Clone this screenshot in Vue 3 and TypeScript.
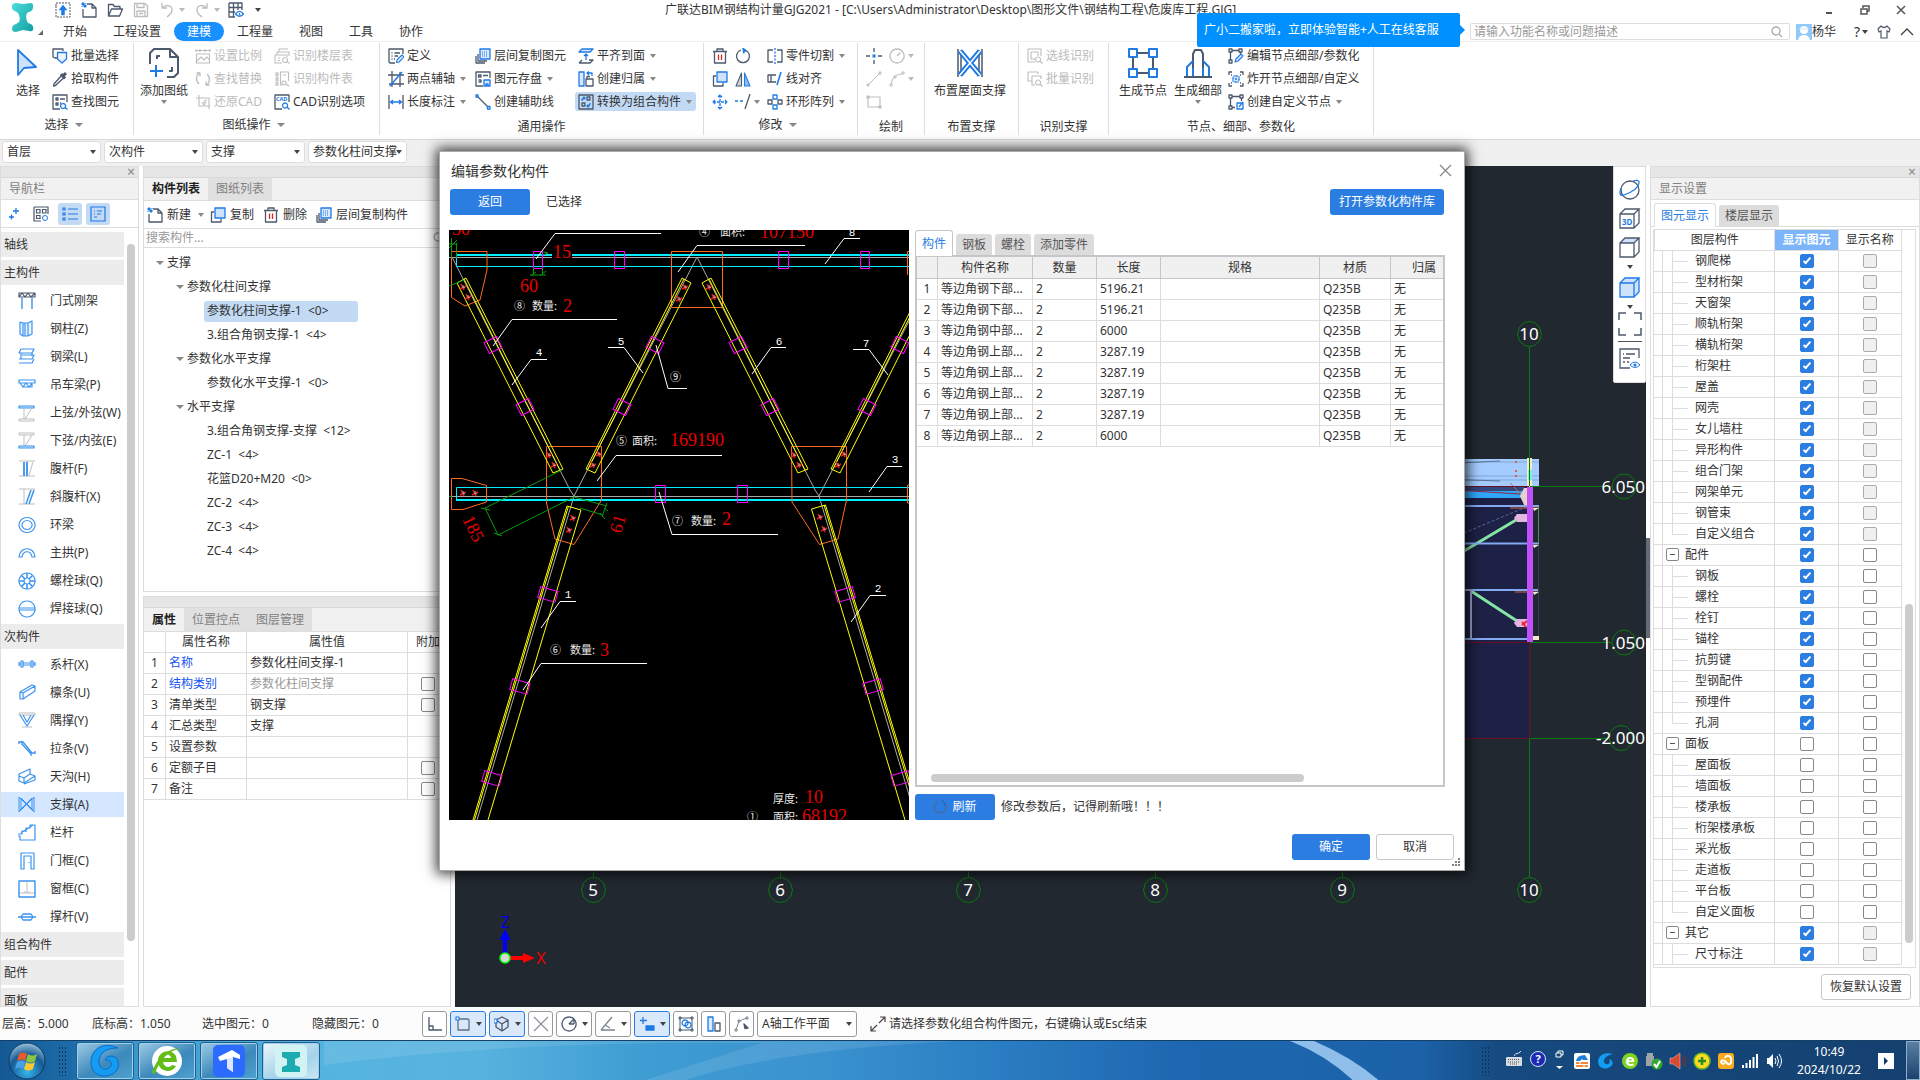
<script setup lang="ts">
import { ref } from 'vue'

const D = '#4c586c'
const B = '#1f7ae6'
const G = '#bdbdbd'
const N = '#3b93ee'

const p = (d: string, stroke = D, fill = 'none', w = 1.3) =>
  `<path d="${d}" stroke="${stroke}" fill="${fill}" stroke-width="${w}" stroke-linejoin="round"/>`

const icons: Record<string, string> = {
  upload: p('M1 4V1H15V15H1Z', D, 'none', 1).replace('/>', ' stroke-dasharray="2 1"/>') + p('M8 3L12 8H9.500V13H6.500V8H4Z', B, B, 0.5),
  newdoc: p('M6 2H11L15 6V15H2V7M11 2V6H15') + p('M1 1H3V3H1ZM3 3H5V5H3ZM1 5V4M5 1V2', B, B, 1),
  open: p('M1.500 14V2.500H6L7.500 4.500H13V7M1.500 14L4.500 7H15.500L12.500 14Z'),
  save: p('M1.500 1.500H12L14.500 4V14.500H1.500ZM4 1.500V5.500H11V1.500M4 14V9H12V14M6 11.500H10', G),
  undo: p('M3 1V6H8M3.500 6C7 2 13 3 13 8C13 12 10 13 8 15', G),
  redo: p('M13 1V6H8M12.500 6C9 2 3 3 3 8C3 12 6 13 8 15', G),
  grideye: p('M1 1H14V8M7 15H1V1M1 5.500H14M1 10H7M5.500 1V15M10 1V8') + p('M7.500 12C10 8.500 13 8.500 15.500 12C13 15 10 15 7.500 12Z', B) + p('M11 12H12', B, B, 2),
  batch: p('M5 10H3L1 9V1H11V3') + p('M5.500 4.500H14.500V11L10 15L5.500 11Z', B, '#edf4ff'),
  pick: p('M10 4L2 13L1.500 15L3.500 14.500L12 6.500') + p('M9 3L13 7.500M11 5L14 2', D, D, 3),
  find: p('M8 15H1V1H15V8M4 4H6V6H4ZM8 5H13M4 9H6V11H4ZM8 9H9') + p('M11 9.500A2.500 2.500 0 1 0 11.100 9.500M13 13.500L15.500 15.500', B),
  scale: p('M1 1V4M15 1V4M1 2.500H15M5 1V4M10 1V4M1.500 6H14.500V15H1.500ZM2 13L6 9L9 12L12 9L14.500 12', G, 'none', 1.1),
  swap: p('M4 13C0 9 1 4 5 2M1.500 2H5V5.500M12 3C16 7 15 12 11 14M14.500 14H11V10.500', G),
  restore: p('M4 1V12H15M1 4H14V15M9 9C9 7 10 6 12 6M7 8L9 11L11 8', G, 'none', 1.1),
  floor: p('M3 7V4H15V8M5 4V1H14M8 15H1V7H13V9M4 10H6M4 12.500H6M11 9.500A2.500 2.500 0 1 0 11.100 9.500M13 13.500L15.500 15.500', G, 'none', 1.1),
  comp: p('M1 2H5M1 4H5M1 7H5M1 9H5M1 12H5M1 14H5M8 14H6.500V1H14.500V10M9 4H12M10 10A2 2 0 1 0 10.100 10M12 13L15 15M3 2V14', G, 'none', 1.1),
  cad: p('M8 15H1V1H15V8') + `<text x="2" y="7" font-size="5.500" font-weight="700" font-family="Noto Sans" fill="${B}">CAD</text>` + p('M11 9A2.500 2.500 0 1 0 11.100 9M13 13L15.500 15.500', B),
  define: p('M7 15H2L1 14V1H15V6M3.500 5H4.500M6.500 5H12M3.500 8H4.500M6.500 8H10M3.500 11H4.500M6 11H7') + p('M8.500 14.500L9 12L14 7L16 9L11 14Z', B, '#edf4ff', 1.1),
  axis2: p('M4 0V16M0 4H16M12 1V16M1 13H16') + p('M2 15L14 1', B, 'none', 1.600),
  length: p('M1 1V15M15 1V15') + p('M2.500 8H13.500M5 6L2.500 8L5 10M11 6L13.500 8L11 10', B),
  layercopy: p('M1 8V15H10M3 6V13H12') + p('M5 1H15V11H5Z', B, '#d9e8fd') + p('M7 4H13M7 6H13M7 8H13', B, 'none', 1).replace('/>', ' stroke-dasharray="1 1"/>'),
  store: p('M8 15H1V1H15V7M3.500 4H6V6H3.500ZM8 4.500H13M3.500 9H6V11H3.500') + p('M9 9H15V15H9Z', B, '#d9e8fd') + p('M11 15V13H13V15', B),
  helpline: p('M2 2L13 13') + p('M1 1H3V3H1ZM12.500 12.500H15V15H12.500Z', B, '#fff'),
  align: p('M4 1H15L12 4H1Z', B, '#d9e8fd') + p('M1 15H12L15 12H11M4 12L1 15') + p('M8 12V6M6 8L8 6L10 8', B),
  owner: p('M1 1H6V15H1Z', B, '#d9e8fd') + p('M8 15V8H15V15ZM9 8V5.500H12') + p('M9 2H14V5M11 0.500L9 2L11 4', B),
  convert: p('M1 1H15V15H1Z') + p('M9 3H12V6H9ZM4 9H7V12H4Z') + p('M4 7C4 4 5 4 7 4M12 9C12 12 11 12 9 12M5.500 2.500L7 4L5.500 5.500M10.500 10.500L9 12L10.500 13.500', B),
  trash: p('M1 3.500H15M5 3V1H11V3M2.500 4V15H13.500V4') + p('M6.500 6.500V12M9.500 6.500V12', '#d22'),
  rotate: p('M10 2A6.500 6.500 0 1 1 6 2') + p('M7.500 0L11 2.500L8 5', B, B),
  copy: p('M4 5H1.500V15H11V12') + p('M5 1H15V11H5Z', B, '#cfe2fb'),
  mirror: p('M6.500 2V15H1Z', D, '#cfd5de', 1.1) + p('M9.500 2V15H15Z', B, '#8fbdf5', 1.1),
  move: p('M8 1V15M1 8H15M6 3L8 1L10 3M6 13L8 15L10 13M3 6L1 8L3 10M13 6L15 8L13 10', B).replace('/>', ' stroke-dasharray="3 1"/>'),
  extend: p('M0 7H10', B).replace('/>', ' stroke-dasharray="3 2"/>') + p('M15 0L10 15'),
  cut: p('M6 14H1V2H6M10 2H15V14H10') + p('M8 0V16', B).replace('/>', ' stroke-dasharray="2 1.500"/>'),
  linealign: p('M9 4H1V11H9M4 4V11') + p('M14 1L10 14', B, 'none', 1.600),
  ring: p('M1 6H5V10H1ZM11 6H15V10H11Z') + p('M6 1H10V5H6ZM6 11H10V15H6Z', B),
  point: p('M8 0V4M8 12V16M0 8H4M12 8H16') + p('M6.500 8H9.500', B, B, 3),
  circle: p('M8 1A7 7 0 1 0 8.100 1M8 8L11.500 4.500', G),
  line: p('M2.500 13.500L13.500 2.500M1 13H3V15H1ZM13 1H15V3H13Z', G, 'none', 1),
  arc: p('M2.500 13C3 7 6 3.500 13 3M1 13H3V15H1ZM13 1H15V3H13ZM5 5H7V7H5Z', G, 'none', 1),
  rect: p('M2 3H14V13H2ZM1 2H3V4H1ZM13 12H15V14H13Z', G, 'none', 1.1),
  selid: p('M8 14H1V1H14V8M4 4H11V8M4 4V11H8M11 9A2.500 2.500 0 1 0 11.100 9M13 13L15.500 15.500', G, 'none', 1.1),
  batchid: p('M5 10H1V1H11V3M8 14H5V5H14V8M11 9A2.500 2.500 0 1 0 11.100 9M13 13L15.500 15.500', G, 'none', 1.1),
  nodeedit: p('M1 1H4V4H1ZM11 1H14V4H11ZM1 12H4V15H1ZM4 2.500H11M2.500 4V12M12.500 4V6') + p('M7 14L8 11L13 6L15 8L10 13Z', B, '#d9e8fd', 1.1),
  nodeburst: p('M1 4V1H4M12 1H15V4M1 12V15H4M12 15H15V12M3 4H4M12 4H13M3 12H4M12 12H13') + p('M5 5H11V11H5ZM8 4V12M4 8H12', B, '#d9e8fd', 1).replace('/>', ' stroke-dasharray="2 1"/>'),
  nodenew: p('M1 1H4V4H1ZM12 1H15V4H12ZM1 12H4V15H1ZM4 2.500H12M2.500 4V12M13.500 4V7M4 13.500H7') + p('M9 9H15V15H9Z', B) + p('M11 13L15 8', B),
}

const big: Record<string, string> = {
  cursor: p('M5 2V27L11 20L23 19Z', B, '#cfe2fb', 1.800),
  addpaper: p('M1 16V5L5 1H21L29 9V25L25 29H18M21 1V9H29M1 10V16', D, 'none', 2) + p('M8 11V8H11M20 23H23V19', D, 'none', 2) + p('M7 17V29M1 23H14', B, 'none', 2),
  brace: p('M3 1V29M27 1V29M6 2V28M24 2V28', D, 'none', 1.500) + p('M5 3L25 27M25 3L5 27', B, 'none', 5.500) + p('M5 3L25 27M25 3L5 27', '#fff', 'none', 1.500),
  node: p('M5 5H25V25H5Z', D, 'none', 2) + p('M1 1H9V9H1ZM21 1H29V9H21ZM1 21H9V29H1ZM21 21H29V29H21Z', B, '#fff', 2),
  detail: p('M10 28V6L12 2H18L20 6V28M1 29H29', D, 'none', 2) + p('M4 28V19L10 13M26 28V19L20 13M10 20V28M20 20V28', B, 'none', 2),
}

const navIcons: Record<string, string> = {
  frame: p('M1 1H17V5H1ZM1 5L4 1L7 5L10 1L13 5L17 1', D, 'none', 1.200) + p('M4 6V17M14 6V17', N, 'none', 1.400),
  col: p('M2 2L5 3V16L2 14ZM5 3H10V16H5M10 3L14 1V14L10 16M7 3V16', N, '#eaf4ff', 1.200),
  beam: p('M3 1H16L14 5H1ZM1 11H14L16 7H4M1 15H14L16 11M3 5V11M14 5V8', N, 'none', 1.200),
  crane: p('M1 4H17V7H1ZM2 7L5 11L8 7L11 11L14 7M5 11H14V8', N, 'none', 1.200),
  up: p('M1 2H16V4H1Z', N, '#cfe5ff', 1.200) + p('M6 4V15M14 4L7 15M1 15H16V17H1Z', G, 'none', 1),
  down: p('M6 3V14M14 3L7 14M1 1H16V3H1Z', G, 'none', 1) + p('M1 14H16V16H1Z', N, '#cfe5ff', 1.200),
  web: p('M1 1H17M1 16H17M15 2L11 15M9 1V16', G, 'none', 1) + p('M6 2V16M9 2V16', N, 'none', 1.800),
  xweb: p('M1 1H17M1 16H17M6 1V16', G, 'none', 1) + p('M13 2L8 16M16 2L11 16', N, 'none', 1.500),
  ring: p('M9 1.500A8 7.500 0 1 0 9.100 1.500M9 4.500A5 4.500 0 1 0 9.100 4.500', N, 'none', 1.200),
  arch: p('M1 13C2 2 16 2 17 13H14C13 6 5 6 4 13Z', N, 'none', 1.200),
  bolt: p('M9 1A8 8 0 1 0 9.100 1M9 6A3 3 0 1 0 9.100 6', N, 'none', 1.200) + p('M9 1V6M9 12V17M1 9H6M12 9H17M3.500 3.500L7 7M11 11L14.500 14.500M14.500 3.500L11 7M7 11L3.500 14.500', N, 'none', 1.600),
  ball: p('M9 1A8 8 0 1 0 9.100 1M1 8H17M1 10H17', N, 'none', 1.200),
  tie: p('M5 7H13V9H5ZM3 5H5V11H3ZM13 5H15V11H13ZM1 6V10M17 6V10M1 8H3M15 8H17', N, 'none', 1.200),
  purlin: p('M2 8L14 1L17 2V7L5 15H2ZM2 8L5 9V15M5 9L17 2', N, 'none', 1.200),
  corner: p('M1 1H17V3H1ZM4 15H14', G, 'none', 1) + p('M2 3L9 14L16 3M5 3L9 10L13 3', N, 'none', 1.200),
  stay: p('M1 2H5L14 13H17M4 1V5M4 4L13 14V16M17 14V11M1 4V1', N, 'none', 1.300),
  gutter: p('M1 6L12 1V6L17 8L6 15L1 13ZM1 8L6 10V15M6 10L12 6M17 8V12L6 16', N, 'none', 1.200),
  brace: p('M1 1V16M3 3V14M16 1V16M14 3V14M1 1L16 16M16 1L1 16M3 2L15 14M14 2L2 14', N, 'none', 1),
  rail: p('M0 10H4V7H8V4H12V1H17V16H2V12H0M3 9L15 1M8 8V5', N, 'none', 1.200),
  door: p('M3 17V1H16V17H13V4H6V17ZM11 10V11', N, 'none', 1.200),
  window: p('M9 2V13M1 13H17M6 12H8M10 12H12', G, 'none', 1) + p('M1 1H17V17H1Z', N, 'none', 1.400),
  strut: p('M0 9H3M15 9H18M5 6H13L15 9L13 12H5L3 9ZM3 9H15', N, 'none', 1.300),
}

type Item = { i: string; t?: string; a?: boolean; off?: boolean; on?: boolean }
type Group = {
  w: number
  pad: number
  label: string
  arrow?: boolean
  bigs: { i: string; t: string; w: number; a?: boolean }[]
  cols: { w: number; items: Item[] }[]
}
const groups: Group[] = [
  { w: 134, pad: 7, label: '选择', arrow: true, bigs: [{ i: 'cursor', t: '选择', w: 42 }], cols: [{ w: 80, items: [{ i: 'batch', t: '批量选择' }, { i: 'pick', t: '拾取构件' }, { i: 'find', t: '查找图元' }] }] },
  { w: 246, pad: 2, label: '图纸操作', arrow: true, bigs: [{ i: 'addpaper', t: '添加图纸', w: 56, a: true }], cols: [
    { w: 79, items: [{ i: 'scale', t: '设置比例', off: true }, { i: 'swap', t: '查找替换', off: true }, { i: 'restore', t: '还原CAD', off: true }] },
    { w: 105, items: [{ i: 'floor', t: '识别楼层表', off: true }, { i: 'comp', t: '识别构件表', off: true }, { i: 'cad', t: 'CAD识别选项' }] }] },
  { w: 324, pad: 5, label: '通用操作', bigs: [], cols: [
    { w: 87, items: [{ i: 'define', t: '定义' }, { i: 'axis2', t: '两点辅轴', a: true }, { i: 'length', t: '长度标注', a: true }] },
    { w: 103, items: [{ i: 'layercopy', t: '层间复制图元' }, { i: 'store', t: '图元存盘', a: true }, { i: 'helpline', t: '创建辅助线' }] },
    { w: 121, items: [{ i: 'align', t: '平齐到面', a: true }, { i: 'owner', t: '创建归属', a: true }, { i: 'convert', t: '转换为组合构件', a: true, on: true }] }] },
  { w: 154, pad: 5, label: '修改', arrow: true, bigs: [], cols: [
    { w: 23, items: [{ i: 'trash' }, { i: 'copy' }, { i: 'move' }] },
    { w: 32, items: [{ i: 'rotate' }, { i: 'mirror' }, { i: 'extend', a: true }] },
    { w: 90, items: [{ i: 'cut', t: '零件切割', a: true }, { i: 'linealign', t: '线对齐' }, { i: 'ring', t: '环形阵列', a: true }] }] },
  { w: 67, pad: 5, label: '绘制', bigs: [], cols: [
    { w: 23, items: [{ i: 'point' }, { i: 'line' }, { i: 'rect' }] },
    { w: 32, items: [{ i: 'circle', a: true, off: true }, { i: 'arc', a: true, off: true }] }] },
  { w: 94, pad: 5, label: '布置支撑', bigs: [{ i: 'brace', t: '布置屋面支撑', w: 80 }], cols: [] },
  { w: 90, pad: 5, label: '识别支撑', bigs: [], cols: [{ w: 80, items: [{ i: 'selid', t: '选线识别', off: true }, { i: 'batchid', t: '批量识别', off: true }] }] },
  { w: 265, pad: 6, label: '节点、细部、参数化', bigs: [{ i: 'node', t: '生成节点', w: 56 }, { i: 'detail', t: '生成细部', w: 54, a: true }], cols: [
    { w: 148, items: [{ i: 'nodeedit', t: '编辑节点细部/参数化' }, { i: 'nodeburst', t: '炸开节点细部/自定义' }, { i: 'nodenew', t: '创建自定义节点', a: true }] }] },
]

const menus = ['开始', '工程设置', '建模', '工程量', '视图', '工具', '协作']
const combos = ['首层', '次构件', '支撑', '参数化柱间支撑']

const nav: { t: string; i?: string }[] = [
  { t: '轴线' }, { t: '主构件' },
  { t: '门式刚架', i: 'frame' }, { t: '钢柱(Z)', i: 'col' }, { t: '钢梁(L)', i: 'beam' }, { t: '吊车梁(P)', i: 'crane' },
  { t: '上弦/外弦(W)', i: 'up' }, { t: '下弦/内弦(E)', i: 'down' }, { t: '腹杆(F)', i: 'web' }, { t: '斜腹杆(X)', i: 'xweb' },
  { t: '环梁', i: 'ring' }, { t: '主拱(P)', i: 'arch' }, { t: '螺栓球(Q)', i: 'bolt' }, { t: '焊接球(Q)', i: 'ball' },
  { t: '次构件' },
  { t: '系杆(X)', i: 'tie' }, { t: '檩条(U)', i: 'purlin' }, { t: '隅撑(Y)', i: 'corner' }, { t: '拉条(V)', i: 'stay' },
  { t: '天沟(H)', i: 'gutter' }, { t: '支撑(A)', i: 'brace' }, { t: '栏杆', i: 'rail' }, { t: '门框(C)', i: 'door' },
  { t: '窗框(C)', i: 'window' }, { t: '撑杆(V)', i: 'strut' },
  { t: '组合构件' }, { t: '配件' }, { t: '面板' },
]

const tree: { t: string; l: number; open?: boolean }[] = [
  { t: '支撑', l: 0, open: true },
  { t: '参数化柱间支撑', l: 1, open: true },
  { t: '参数化柱间支撑-1  <0>', l: 2 },
  { t: '3.组合角钢支撑-1  <4>', l: 2 },
  { t: '参数化水平支撑', l: 1, open: true },
  { t: '参数化水平支撑-1  <0>', l: 2 },
  { t: '水平支撑', l: 1, open: true },
  { t: '3.组合角钢支撑-支撑  <12>', l: 2 },
  { t: 'ZC-1  <4>', l: 2 },
  { t: '花篮D20+M20  <0>', l: 2 },
  { t: 'ZC-2  <4>', l: 2 },
  { t: 'ZC-3  <4>', l: 2 },
  { t: 'ZC-4  <4>', l: 2 },
]
const selectedNode = ref('参数化柱间支撑-1  <0>')

const props = [
  { n: '名称', v: '参数化柱间支撑-1', blue: true },
  { n: '结构类别', v: '参数化柱间支撑', blue: true, gray: true, c: true },
  { n: '清单类型', v: '钢支撑', c: true },
  { n: '汇总类型', v: '支撑' },
  { n: '设置参数', v: '' },
  { n: '定额子目', v: '', c: true },
  { n: '备注', v: '', c: true },
]

const parts = [
  ['等边角钢下部...', '5196.21'], ['等边角钢下部...', '5196.21'], ['等边角钢中部...', '6000'],
  ['等边角钢上部...', '3287.19'], ['等边角钢上部...', '3287.19'], ['等边角钢上部...', '3287.19'],
  ['等边角钢上部...', '3287.19'], ['等边角钢上部...', '6000'],
]

type Layer = { t: string; top?: boolean; last?: boolean; show: boolean; dis: boolean }
const mk = (names: string, show: boolean, dis: boolean): Layer[] =>
  names.split(' ').map((t, k, a) => ({ t, show, dis, last: k === a.length - 1 }))
const layers = ref<Layer[]>([
  ...mk('钢爬梯 型材桁架 天窗架 顺轨桁架 横轨桁架 桁架柱 屋盖 网壳 女儿墙柱 异形构件 组合门架 网架单元 钢管束 自定义组合', true, true),
  { t: '配件', top: true, show: true, dis: false },
  ...mk('钢板 螺栓 栓钉 锚栓 抗剪键 型钢配件 预埋件 孔洞', true, false),
  { t: '面板', top: true, show: false, dis: false },
  ...mk('屋面板 墙面板 楼承板 桁架楼承板 采光板 走道板 平台板 自定义面板', false, false),
  { t: '其它', top: true, show: true, dis: true },
  { t: '尺寸标注', show: true, dis: true },
])

const status: { w: number; on?: boolean; a?: boolean; s: string }[] = [
  { w: 25, s: p('M2 1V14H15M2 10H6V14') },
  { w: 36, on: true, a: true, s: p('M3 3H13L14 4V14H3Z', '#5d7088') + p('M1 1H4V4H1Z', B, '#fff', 1.200) },
  { w: 36, on: true, a: true, s: p('M8 1L14 4V11L8 15L2 11V4ZM2 4L8 8L14 4M8 8V15') + p('M0 3H3V7H0Z', B, '#fff', 1.200) },
  { w: 25, s: p('M1 1L15 15M15 1L1 15', '#8d95a0') },
  { w: 36, a: true, s: p('M8 1A7 7 0 1 0 8.100 1M8 8L13 3M8 8H13M13 3V8') },
  { w: 36, a: true, s: p('M1 14H15M1 14L12 1M5 9L10 12', '#7d8590') },
  { w: 36, on: true, a: true, s: p('M4 1V8M1 4.500H8', B) + p('M7 10H15V14H7Z', B, B) },
  { w: 25, s: p('M2 2H14V14H2ZM1 1H3V3H1ZM13 1H15V3H13ZM1 13H3V15H1ZM13 13H15V15H13Z', D, 'none', 1) + p('M7 4A3 3 0 1 0 7.100 4M10 6A3 3 0 1 0 10.100 6', B) },
  { w: 25, s: p('M2 1H7V15H2Z', B, '#d9e8fd') + p('M9 15V7H14V15Z') },
  { w: 25, s: p('M2 14L5 5L13 2M1 13H3V15H1ZM4 4H6V6H4ZM12 1H14V3H12Z', '#7d8590', 'none', 1) + p('M10 8L14 12L11 12.500Z', D, D) },
]

const axes = [{ x: 593, n: '5' }, { x: 780, n: '6' }, { x: 968, n: '7' }, { x: 1155, n: '8' }, { x: 1342, n: '9' }, { x: 1529, n: '10' }]
const oct = 'M-5 -11.500L0 -12.500L5 -11.500L10 -7L12 0L10 7L5 11.500L0 12.500L-5 11.500L-10 7L-12 0L-10 -7Z'
</script>

<template>
  <div class="app">
    <header class="top">
      <div class="logo">
        <svg width="24" height="32" viewBox="0 0 24 32">
          <defs><linearGradient id="lg" x1="0" y1="0" x2="1" y2="1"><stop offset="0" stop-color="#4fdcdc" /><stop offset="1" stop-color="#129fa3" /></linearGradient></defs>
          <path d="M1 3Q2 1 5 1L12 2L19 1Q23 1 22 5Q22 9 18 10L16 11Q14 16 17 21L20 22Q23 24 22 28Q21 30 18 29L12 28L5 30Q1 30 1 27Q1 23 5 22L8 20Q10 16 7 11L4 9Q0 8 1 3Z" fill="url(#lg)" />
        </svg>
        <i class="corner"></i>
      </div>
      <div class="topmain">
        <div class="quick">
          <button v-for="q in ['upload', 'newdoc', 'open', 'save']" :key="q" class="qb" :aria-label="q"><svg width="16" height="16" v-html="icons[q]"></svg></button>
          <button class="qb" aria-label="undo"><svg width="16" height="16" v-html="icons.undo"></svg><i class="ar lt"></i></button>
          <button class="qb r" aria-label="redo"><svg width="16" height="16" v-html="icons.redo"></svg><i class="ar lt"></i></button>
          <button class="qb v" aria-label="view"><svg width="16" height="16" v-html="icons.grideye"></svg></button>
          <i class="ar dk"></i>
          <span class="title">广联达BIM钢结构计量GJG2021 - [C:\Users\Administrator\Desktop\图形文件\钢结构工程\危废库工程.GJG]</span>
          <span class="winbtns">
            <button aria-label="最小化"><svg width="10" height="10"><path d="M2 8H8" stroke="#555" stroke-width="2" /></svg></button>
            <button aria-label="还原"><svg width="10" height="10"><path d="M3 3V1H9V6H7M1 4H7V9H1Z" stroke="#555" fill="none" stroke-width="1.500" /></svg></button>
            <button aria-label="关闭"><svg width="10" height="10"><path d="M1 1L9 9M9 1L1 9" stroke="#555" stroke-width="1.500" /></svg></button>
          </span>
        </div>
        <div class="menurow">
          <nav class="menus">
            <button v-for="m in menus" :key="m" :class="{ on: m === '建模' }">{{ m }}</button>
          </nav>
          <div class="user">
            <label class="fsearch"><input type="text" aria-label="搜索功能" placeholder="请输入功能名称或问题描述" /><svg width="12" height="12"><circle cx="5" cy="5" r="4" fill="none" stroke="#aaa" stroke-width="1.300" /><path d="M8 8L11 11" stroke="#aaa" stroke-width="1.300" /></svg></label>
            <svg class="avatar" width="16" height="16"><rect width="16" height="16" fill="#90c8fb" /><circle cx="8" cy="6" r="4" fill="#fff" /><path d="M2 16Q3 11 8 11Q13 11 14 16Z" fill="#fff" /><path d="M3 5H13" stroke="#cfe8ff" /></svg>
            <span>杨华</span>
            <button class="help" aria-label="帮助"><b>?</b><i class="ar dk"></i></button>
            <button class="shirt" aria-label="皮肤"><svg width="14" height="14"><path d="M4 1L1 4L2 7L4 6V13H10V6L12 7L13 4L10 1Q7 4 4 1Z" fill="none" stroke="#4c586c" stroke-width="1.200" /></svg></button>
            <button class="fold" aria-label="收起"><svg width="14" height="10"><path d="M1 8L7 2L13 8" fill="none" stroke="#444" stroke-width="1.300" /></svg></button>
          </div>
        </div>
      </div>
      <div class="tip">广小二搬家啦，立即体验智能+人工在线客服</div>
    </header>

    <section class="ribbon">
      <div v-for="g in groups" :key="g.label" class="group" :style="{ width: g.w + 'px' }">
        <div class="gbody" :style="{ paddingLeft: g.pad + 'px' }">
          <button v-for="b in g.bigs" :key="b.t" class="bigbtn" :style="{ width: b.w + 'px' }">
            <svg width="30" height="30" v-html="big[b.i]"></svg>
            <span>{{ b.t }}</span>
            <i v-if="b.a" class="ar"></i>
          </button>
          <div v-for="(c, ci) in g.cols" :key="ci" class="gcol" :style="{ width: c.w + 'px' }">
            <button v-for="it in c.items" :key="it.i" class="item" :class="{ off: it.off, on: it.on }" :aria-label="it.t || it.i">
              <svg width="16" height="16" v-html="icons[it.i]"></svg><span v-if="it.t">{{ it.t }}</span><i v-if="it.a" class="ar"></i>
            </button>
          </div>
        </div>
        <div class="glabel" :class="{ plain: !g.arrow }">{{ g.label }}<i v-if="g.arrow" class="ar w"></i></div>
      </div>
    </section>

    <div class="combos">
      <label v-for="c in combos" :key="c" class="combo"><select :aria-label="c"><option>{{ c }}</option></select><i class="ar dk"></i></label>
    </div>

    <main class="main">
      <aside class="navp">
        <div class="strip"><span class="x">×</span></div>
        <div class="ptitle">导航栏</div>
        <div class="navtools">
          <button aria-label="添加"><svg width="10" height="12"><path d="M0 9H5M2.500 6.500V11.500M4 3H10M7 0V6" stroke="#1f7ae6" stroke-width="1.300" /></svg></button>
          <button aria-label="网格"><svg width="16" height="16"><path d="M1 1H15V8M8 15H1V1M3.500 3.500H7V7H3.500ZM9.500 3.500H13V7H9.500ZM3.500 9.500H7V12.500H3.500Z" fill="none" stroke="#4c586c" stroke-width="1.200" /><circle cx="12" cy="12" r="2.500" fill="#fff" stroke="#1f7ae6" /></svg></button>
          <button class="on" aria-label="列表"><svg width="16" height="16"><path d="M6 3H16M6 8H16M6 13H16M1 2H3V4H1ZM1 7H3V9H1ZM1 12H3V14H1Z" fill="none" stroke="#1f7ae6" stroke-width="1.200" /></svg></button>
          <button class="on" aria-label="详情"><svg width="16" height="16"><path d="M1 1H15V15H1ZM4 5H5M7 5H12M4 8H5M7 8H11M4 11H7" fill="none" stroke="#1f7ae6" stroke-width="1.200" /></svg></button>
        </div>
        <div class="navbody">
          <div class="navlist">
            <a v-for="n in nav" :key="n.t + (n.i || '')" href="#" :class="n.i ? ['leaf', { on: n.i === 'brace' }] : 'cat'"><svg v-if="n.i" width="18" height="18" v-html="navIcons[n.i]"></svg>{{ n.t }}</a>
          </div>
          <div class="navbar"><i></i></div>
        </div>
      </aside>

      <div class="mid">
        <section class="box list">
          <div class="strip"></div>
          <div class="tabs"><button class="on">构件列表</button><button>图纸列表</button></div>
          <div class="ltools">
            <button><svg width="16" height="16" v-html="icons.newdoc"></svg><span>新建</span><i class="ar"></i></button>
            <button><svg width="16" height="16" v-html="icons.copy"></svg><span>复制</span></button>
            <button><svg width="16" height="16" v-html="icons.trash"></svg><span>删除</span></button>
            <button><svg width="16" height="16" v-html="icons.layercopy"></svg><span>层间复制构件</span></button>
          </div>
          <label class="lsearch"><input type="text" aria-label="搜索构件" placeholder="搜索构件..." /><svg width="12" height="12"><circle cx="5" cy="5" r="4" fill="none" stroke="#aaa" stroke-width="1.300" /></svg></label>
          <ul class="tree">
            <li v-for="t in tree" :key="t.t" :class="'l' + t.l">
              <i v-if="t.open" class="ar w"></i><button :class="{ on: t.t === selectedNode }" @click="selectedNode = t.t">{{ t.t }}</button>
            </li>
          </ul>
        </section>
        <section class="box prop">
          <div class="strip"></div>
          <div class="tabs"><button class="on">属性</button><button>位置控点</button><button>图层管理</button></div>
          <table class="ptable">
            <colgroup><col style="width: 22px" /><col style="width: 81px" /><col style="width: 161px" /><col /></colgroup>
            <thead><tr><th></th><th>属性名称</th><th>属性值</th><th>附加</th></tr></thead>
            <tbody>
              <tr v-for="(r, k) in props" :key="r.n">
                <td class="num">{{ k + 1 }}</td><td :class="{ blue: r.blue }">{{ r.n }}</td><td :class="{ gray: r.gray }">{{ r.v }}</td>
                <td class="c"><input v-if="r.c" type="checkbox" :aria-label="r.n" /></td>
              </tr>
            </tbody>
          </table>
        </section>
      </div>

      <section class="view">
        <svg class="scene" viewBox="455 166 1191 841" preserveAspectRatio="xMinYMin slice" font-family="Noto Sans" font-size="17">
          <rect x="1440" y="487" width="90" height="251" fill="#1d2145" />
          <rect x="1440" y="459" width="99" height="28" fill="#a4ccff" />
          <path d="M1440 462H1539M1440 476H1539M1440 480H1539" stroke="#7ea7dc" />
          <path d="M1440 464L1500 461M1440 479L1500 481" stroke="#5d7396" fill="none" /><path d="M1516 461V463M1516 470V472M1516 475V477" stroke="#d8663a" stroke-width="2" />
          <rect x="1440" y="487" width="85" height="5" fill="#31487e" />
          <rect x="1440" y="491" width="85" height="7" fill="#2fa6f7" />
          <path d="M1440 489L1520 494" stroke="#8f2540" />
          <path d="M1464 533L1526 507" stroke="#5b68a8" stroke-dasharray="3 2" />
          <path d="M1464 551L1516 520M1471 591L1517 621" stroke="#86e5a4" stroke-width="3" />
          <path d="M1440 506H1539M1440 543.500H1539M1440 590H1539M1440 639H1539" stroke="#84a9f0" stroke-width="2" />
          <path d="M1464 590H1471V640" stroke="#9aa4c8" stroke-width="2" fill="none" />
          <path d="M1510 483L1522 495M1510 508H1539M1515 592H1539" stroke="#d8663a" fill="none" />
          <path d="M1538.500 507V543" stroke="#4f8a5a" /><path d="M1538.500 545V640" stroke="#333c5c" />
          <path d="M1524 488H1528V505H1524L1520 496Z" fill="#e8cfcb" />
          <path d="M1517 514H1527V522H1517L1514 518ZM1517 619H1527V627H1517L1514 623Z" fill="#e2b5df" />
          <path d="M1522 622L1526 627M1527 621L1522 625" stroke="#f02030" stroke-width="2" />
          <path d="M1533 508H1539L1534 511ZM1533 545H1539L1534 548ZM1533 592H1539L1534 595ZM1533 636H1539V640H1533Z" fill="#f3e8c8" />
          <rect x="1527" y="487" width="6" height="155" fill="#bf50fa" />
          <rect x="1527" y="458" width="5" height="29" fill="#f4ecc6" /><rect x="1528" y="470" width="4" height="10" fill="#7ff0d8" />
          <path d="M1440 486.500H1529M1440 642.500H1529.500V738.500H1440" stroke="#6b1026" fill="none" />
          <path d="M1529.500 346V486M1529.500 738V878M1530 486.500H1612M1530 642.500H1612M1530 738.500H1609" stroke="#087a10" fill="none" />
          <g stroke="#087a10" fill="none">
            <path :d="oct" transform="translate(1529.500 334)" /><path :d="oct" transform="translate(1624 486.500)" /><path :d="oct" transform="translate(1624 642.500)" /><path :d="oct" transform="translate(1621 738)" />
            <template v-for="a in axes" :key="a.n"><path :d="oct" :transform="`translate(${a.x + 0.5} 890)`" /><path :d="`M${a.x + 0.5} 860V878`" /></template>
          </g>
          <g fill="#fff">
            <text x="1529" y="340" text-anchor="middle">10</text>
            <text v-for="a in axes" :key="a.n" :x="a.x" y="896" text-anchor="middle">{{ a.n }}</text>
            <text x="1645" y="493" text-anchor="end">6.050</text><text x="1645" y="649" text-anchor="end">1.050</text><text x="1645" y="744" text-anchor="end">-2.000</text>
          </g>
          <path d="M505 956V936" stroke="#00f" stroke-width="4" /><path d="M499.500 940L505 929L510.500 940Z" fill="#00f" />
          <path d="M509 958H524" stroke="#f00" stroke-width="4" /><path d="M523 953L535 958L523 963Z" fill="#f00" />
          <circle cx="505" cy="958" r="5" fill="#d8d8d8" stroke="#0f0" stroke-width="1.500" />
          <text x="505" y="928" text-anchor="middle" fill="#0000e0" font-size="16">Z</text><text x="541" y="964" text-anchor="middle" fill="#f00000" font-size="16">X</text>
        </svg>
        <div class="vtools">
          <button aria-label="旋转"><svg width="24" height="24"><circle cx="12" cy="12" r="9" fill="none" stroke="#4c586c" stroke-width="1.300" /><path d="M3 10Q0 19 6 17Q20 12 21 5Q22 1 15 3" fill="none" stroke="#1f7ae6" stroke-width="1.300" /></svg></button>
          <button aria-label="三维"><svg width="24" height="24"><path d="M2 7H16V21H2ZM2 7L7 2H21L16 7M21 2V16L16 21" fill="none" stroke="#4c586c" stroke-width="1.300" /><text x="4" y="18" font-size="8" font-weight="700" font-family="Noto Sans" fill="#1f7ae6">3D</text></svg></button>
          <button aria-label="线框"><svg width="24" height="24"><path d="M2 7L7 2H21L16 7Z" fill="#cfe2fb" /><path d="M2 7H16V21H2ZM2 7L7 2H21L16 7M21 2V16L16 21" fill="none" stroke="#4c586c" stroke-width="1.300" /></svg></button>
          <i class="ar dk"></i>
          <button aria-label="实体"><svg width="24" height="24"><path d="M2 7L7 2H21V16L16 21H2Z" fill="#cfe2fb" /><path d="M2 7H16V21H2ZM2 7L7 2H21L16 7M21 2V16L16 21" fill="none" stroke="#1f7ae6" stroke-width="1.300" /></svg></button>
          <i class="ar dk"></i>
          <button class="fit" aria-label="全屏"><svg width="24" height="24"><path d="M1 8V1H8M16 1H23V8M1 16V23H8M16 23H23V16" fill="none" stroke="#4c586c" stroke-width="1.500" /></svg></button>
          <hr />
          <button aria-label="显示设置"><svg width="24" height="24"><path d="M21 11V2H2V21H12M5 7H6M8 7H17M5 11H12M5 15H7M9 15H11" fill="none" stroke="#4c586c" stroke-width="1.300" /><path d="M12 18Q17 12 22 18Q17 23 12 18Z" fill="#fff" stroke="#1f7ae6" /><circle cx="17" cy="18" r="1.500" fill="#1f7ae6" /></svg></button>
        </div>
      </section>
      <div class="handle"><i></i></div>

      <aside class="disp">
        <div class="strip"><span class="x">×</span></div>
        <div class="ptitle">显示设置</div>
        <div class="dtabs"><button class="on">图元显示</button><button>楼层显示</button></div>
        <div class="dbody">
          <table class="dtable">
            <colgroup><col style="width: 121px" /><col style="width: 63px" /><col style="width: 63px" /></colgroup>
            <thead><tr><th>图层构件</th><th class="on">显示图元</th><th>显示名称</th></tr></thead>
            <tbody>
              <tr v-for="l in layers" :key="l.t">
                <td :class="l.top ? 'par' : ['chd', { last: l.last }]"><span v-if="l.top" class="minus"></span>{{ l.t }}</td>
                <td class="c"><input v-model="l.show" type="checkbox" :aria-label="l.t + '显示图元'" /></td>
                <td class="c"><input type="checkbox" :disabled="l.dis" :aria-label="l.t + '显示名称'" /></td>
              </tr>
            </tbody>
          </table>
          <div class="dscroll"><i></i></div>
        </div>
        <div class="dfoot"><button class="white">恢复默认设置</button></div>
      </aside>
    </main>

    <footer class="status">
      <span class="s1">层高：5.000</span><span class="s2">底标高：1.050</span><span class="s2">选中图元：0</span><span class="s2">隐藏图元：0</span>
      <button v-for="(s, k) in status" :key="k" :class="{ on: s.on }" :style="{ width: s.w + 'px' }" :aria-label="'捕捉' + (k + 1)"><svg width="16" height="16" v-html="s.s"></svg><i v-if="s.a" class="ar dk"></i></button>
      <label class="plane"><select aria-label="工作平面"><option>A轴工作平面</option></select><i class="ar dk"></i></label>
      <svg class="exp" width="16" height="16"><path d="M9 7L15 1M10 1H15V6M7 9L1 15M1 10V15H6" fill="none" stroke="#444" stroke-width="1.200" /></svg>
      <span>请选择参数化组合构件图元，右键确认或Esc结束</span>
    </footer>

    <div class="taskbar">
      <button class="start" aria-label="开始菜单">
        <svg width="38" height="38" viewBox="0 0 38 38"><defs><radialGradient id="orb" cx=".5" cy=".8" r=".8"><stop offset="0" stop-color="#37b5ee" /><stop offset=".6" stop-color="#175a94" /><stop offset="1" stop-color="#9cc3dd" /></radialGradient></defs>
          <circle cx="19" cy="19" r="18" fill="url(#orb)" stroke="#0d3a60" />
          <path d="M11 12Q15 9 19 12L17 19Q14 16 9 19Z" fill="#e8592b" /><path d="M20 12Q24 15 29 12L27 19Q23 22 18 19Z" fill="#8cc63e" /><path d="M9 20Q13 17 17 20L15 27Q12 24 7 27Z" fill="#4aa0e6" /><path d="M18 20Q22 23 27 20L25 27Q20 30 16 27Z" fill="#fcc931" /></svg>
      </button>
      <i class="dots"></i>
      <button class="tb" aria-label="广联达"><svg width="34" height="34"><path d="M30 4C20-1 8 1 4 12C0 25 8 33 18 32C28 31 33 23 29 15C25 10 18 12 17 16C22 15 25 19 22 23C17 28 10 24 11 16C12 9 18 4 30 4Z" fill="#159bf2" stroke="#0a69c9" /></svg></button>
      <button class="tb" aria-label="浏览器"><svg width="34" height="34"><circle cx="17" cy="17" r="15" fill="#fff" /><path d="M26 22C22 30 9 28 8 18C7 8 20 3 26 12L27 18H13C14 24 20 24 22 21ZM13 14H21C20 9 14 9 13 14Z" fill="#62bd19" /><path d="M2 29C6 14 20 2 32 5C22 4 10 14 5 30Z" fill="#62bd19" /></svg></button>
      <button class="tb" aria-label="编辑器"><svg width="34" height="34"><rect x="1" y="1" width="32" height="32" rx="5" fill="#2b6bff" /><path d="M6 13L20 6L28 11V15L21 13V28L15 24V15L8 17Z" fill="#fff" /><path d="M15 15L21 13V28L15 24Z" fill="#dde8ff" /></svg></button>
      <button class="tb on" aria-label="钢结构"><svg width="34" height="34"><rect x="1" y="1" width="32" height="32" rx="5" fill="#d2f3f3" /><path d="M8 8H26V13L21 15V21L26 23V28H8V23L13 21V15L8 13Z" fill="#1cabb0" /></svg></button>
      <svg class="sweep" viewBox="0 0 1160 40" preserveAspectRatio="none"><path d="M972 0H996Q1034 16 1062 40H1036Q1008 14 972 0Z" fill="#b5dcff" opacity=".75" /><path d="M0 24Q180 0 440 2L320 40H360Q460 8 640 0H0Z" fill="#fff" opacity=".1" /></svg>
      <i class="dots"></i>
      <div class="tray">
        <svg width="18" height="18"><rect x="1" y="7" width="16" height="9" rx="1" fill="#d8dbe0" /><path d="M3 9.500H15M3 12H15M5 14H13" stroke="#555" stroke-dasharray="1 1" /><path d="M9 6Q10 3 14 3L16 1" stroke="#d8dbe0" fill="none" /></svg>
        <svg width="18" height="18"><circle cx="9" cy="9" r="7.500" fill="#1b2bb5" stroke="#dfe4f5" /><text x="9" y="13" text-anchor="middle" font-size="11" font-weight="700" fill="#fff" font-family="Noto Sans">?</text></svg>
        <svg class="mini" width="12" height="22"><path d="M4 3V1H9V5H7M2 3H7V7H2Z" stroke="#fff" fill="none" /><path d="M2 16H9L5.500 19Z" fill="#fff" /></svg>
        <svg width="18" height="18"><rect x="1" y="1" width="16" height="16" rx="2" fill="#fff" /><path d="M3 9Q4 3 12 3L15 8H10Q9 6 7 9Z" fill="#1a80da" /><path d="M3 10H15V15H3Z" fill="#ee8a3a" /><path d="M3 12.500H15M7 10V12M11 12V15" stroke="#fff" /></svg>
        <svg width="18" height="18"><path d="M16 2C9 0 2 2 1 9C1 15 6 18 11 16C17 14 17 8 12 7C14 10 12 13 9 12C5 11 6 4 16 2Z" fill="#129cf2" /></svg>
        <svg width="18" height="18"><circle cx="9" cy="9" r="8" fill="#7ed321" /><text x="9" y="14" text-anchor="middle" font-size="16" font-weight="700" fill="#fff" font-family="Noto Sans">e</text></svg>
        <svg width="18" height="18"><path d="M2 1H8V4H2ZM1 4H9V14H1Z" fill="#a0a4a8" /><circle cx="12" cy="12" r="5.500" fill="#2ea82e" /><path d="M9 12L11.500 15L15 9" stroke="#fff" stroke-width="2" fill="none" /></svg>
        <svg width="18" height="18"><path d="M1 6H4L11 1V17L4 12H1Z" fill="#d94a32" stroke="#f0c8bc" stroke-width=".5" /><path d="M13 5Q16 9 13 13M15 3Q19 9 15 15" stroke="#8d2e20" fill="none" /></svg>
        <svg width="18" height="18"><circle cx="9" cy="9" r="8" fill="#fcdc1e" stroke="#69b52d" stroke-width="1.500" /><path d="M9 5V13M5 9H13" stroke="#278c2a" stroke-width="2.500" /></svg>
        <svg width="18" height="18"><rect x="1" y="1" width="16" height="16" rx="3" fill="#fcab1d" /><path d="M8 6A3 3 0 0 1 14 8Q15 13 11 12L8 9Q5 7 4 10Q5 13 8 11" fill="none" stroke="#fff" stroke-width="2" /></svg>
        <svg width="18" height="18"><path d="M2 16V13M5.500 16V11M9 16V8M12.500 16V5M16 16V2" stroke="#fff" stroke-width="2" /></svg>
        <svg width="18" height="18"><path d="M2 6H4L8 2V16L4 12H2Z" fill="#fff" /><path d="M10 6Q12 9 10 12M12 4Q15 9 12 14M14 2Q19 9 14 16" stroke="#fff" fill="none" /></svg>
      </div>
      <div class="clock"><span>10:49</span><span>2024/10/22</span></div>
      <svg class="play" width="16" height="16"><rect width="16" height="16" fill="#fff" /><path d="M6 4L10 8L6 12Z" fill="#163b66" /></svg>
      <button class="desk" aria-label="显示桌面"></button>
    </div>

    <div class="dialog" role="dialog" aria-label="编辑参数化构件">
      <div class="dhead"><h1>编辑参数化构件</h1><button aria-label="关闭"><svg width="13" height="13"><path d="M1 1L12 12M12 1L1 12" stroke="#888" stroke-width="1.300" /></svg></button></div>
      <div class="dbar"><button class="blue back">返回</button><span>已选择</span><button class="blue lib">打开参数化构件库</button></div>
      <div class="dmain">
        <svg class="cad" viewBox="449 230 460 590" preserveAspectRatio="xMinYMin slice" fill="none" font-family="'Noto Sans CJK SC', sans-serif" font-size="12">
          <rect x="449" y="230" width="460" height="590" fill="#000" />
          <g stroke="#a8a8a8">
            <path d="M449 257.500H909M449 496.500H909" />
            <path d="M452 257L570 490L574 496L697 257L815 490L819 496L942 257M574 496L477 820M819 496L912 805" />
          </g>
          <g stroke="#00f0ff">
            <path d="M456.500 254V266.500H909M456.500 500V487.500H909" /><path d="M456 255H909M456 500H909" stroke-width="2" />
          </g>
          <g stroke="#ff6a20">
            <path d="M451.500 251.500H487L487 270L480 300L465 306L451.500 297.500Z M671.500 251.500H722.500V307.500H671.500Z M909 251.500H907.500V275" />
            <path d="M546.500 446.500H601.500V500L574 544.500L555 539L546.500 503Z M791.500 446.500H846.500V500L838 539L819.500 544.500L792 502Z" />
            <path d="M451.500 478.500H462L486.500 485.500V502L463 509.500H451.500Z M909 485H907.500V503H909" />
          </g>
          <g stroke="#ff0">
            <path d="M457 283L466 278L563 469L553 473ZM464 279L560 470M702 283L711 278L808 469L798 473ZM709 279L805 470" />
            <path v-for="o in [0, 245]" :key="o" :transform="`translate(${o} 0)`" d="M586 469L682 278L691 283L595 473ZM588 469L684 279" />
            <path d="M473 820L567 506L581 510L488 820M474.500 820L568.500 506M905 820L811.500 509L825.500 505L912 790M824 505L911 792" />
          </g>
          <g stroke="#f0f">
            <path d="M533.500 251.500H542.500V268.500H533.500ZM614.500 251.500H624.500V268.500H614.500ZM778.500 251.500H788.500V268.500H778.500ZM860.500 251.500H869.500V268.500H860.500ZM655.500 485.500H665.500V502.500H655.500ZM737.500 485.500H747.500V502.500H737.500Z" />
            <rect v-for="q in [[493, 345], [525, 407], [738, 345], [770, 407]]" :key="'a' + q[0]" x="-7" y="-6" width="14" height="12" :transform="`translate(${q[0]} ${q[1]}) rotate(-27)`" />
            <rect v-for="q in [[655, 345], [622, 407], [900, 345], [867, 407]]" :key="'b' + q[0]" x="-7" y="-6" width="14" height="12" :transform="`translate(${q[0]} ${q[1]}) rotate(27)`" />
            <rect v-for="q in [[548, 594], [520, 686], [492, 778]]" :key="'c' + q[0]" x="-9" y="-5" width="18" height="11" :transform="`translate(${q[0]} ${q[1]}) rotate(16)`" />
            <rect v-for="q in [[845, 594], [873, 686], [901, 778]]" :key="'d' + q[0]" x="-9" y="-5" width="18" height="11" :transform="`translate(${q[0]} ${q[1]}) rotate(-16)`" />
          </g>
          <g v-for="q in [[463, 287], [468, 297], [685, 287], [679, 299], [709, 287], [714, 297], [549, 455], [554, 465], [599, 454], [593, 465], [794, 455], [799, 465], [844, 454], [838, 465], [463, 493], [475, 493], [573, 518], [569, 530], [820, 517], [824, 529]]" :key="'r' + q[0] + q[1]" :transform="`translate(${q[0]} ${q[1]})`">
            <path d="M-2 -3L1 3M3 -1L-3 2" stroke="#f01818" stroke-width="1.500" /><path d="M0 0L2 1M0 -2V1" stroke="#b0b0b0" />
          </g>
          <g stroke="#0a9a10">
            <path d="M451.500 238V258M456.500 243V258M449 248L457 240M449 244H456M449 286L464 280M533.500 268V274M542.500 268V274M530 275H546M531 276L536 272M540 276L546 271M543 252L548 253L543 255" />
            <path d="M562 470L485 508L498 535L574 497L607 506M603 515L580 508M481 508L490 510M494 533L502 536M607 503L602 517M604 508L608 511M600 513L605 519M449 496.500H452" />
          </g>
          <g stroke="#fff">
            <path d="M536 259L555 233.500H661M678 272L697 245.500H805M825 264L844 238.500H860M493 346L512 319.500H617M512 385L531 359.500H547M608 347.500H624L643 373M656 345L668 388.500H687M752 374L771 347.500H786M853 349.500H869L888 375M597 481L616 455.500H722M869 492L887 466.500H902" />
            <path d="M659 492L672 534.500H778M541 628L560 601.500H576M523 690L541 663.500H647M851 622L870 595.500H886" />
          </g>
          <rect x="552" y="247" width="20" height="14" fill="#000" />
          <g fill="#e60000" font-family="'Liberation Serif', serif" font-size="18">
            <text x="452" y="235">50</text><text x="553" y="258">15</text><text x="520" y="292">60</text><text x="760" y="238">107150</text><text x="563" y="312">2</text><text x="670" y="446">169190</text><text x="722" y="525">2</text><text x="600" y="656">3</text><text x="805" y="803">10</text><text x="802" y="822">68192</text>
            <text transform="translate(462 519) rotate(64)">185</text><text transform="translate(621 534) rotate(-74)">61</text>
          </g>
          <g fill="#e8e8e8" font-size="11">
            <text x="699" y="236">④</text><text x="720" y="236">面积:</text><text x="514" y="310">⑧</text><text x="532" y="310">数量:</text><text x="670" y="381">⑨</text><text x="616" y="445">⑤</text><text x="632" y="445">面积:</text><text x="672" y="525">⑦</text><text x="691" y="525">数量:</text><text x="550" y="654">⑥</text><text x="570" y="654">数量:</text><text x="773" y="803">厚度:</text><text x="747" y="821">①</text><text x="773" y="821">面积:</text>
          </g>
          <g fill="#fff" font-family="'Liberation Mono', monospace" font-size="11" text-anchor="middle">
            <text x="852" y="236">8</text><text x="539" y="356">4</text><text x="621" y="345">5</text><text x="779" y="345">6</text><text x="866" y="347">7</text><text x="895" y="463">3</text><text x="568" y="598">1</text><text x="878" y="592">2</text>
          </g>
        </svg>
        <div class="dright">
          <div class="etabs"><button class="on">构件</button><button>钢板</button><button>螺栓</button><button>添加零件</button></div>
          <div class="ebox">
            <table class="etable">
              <colgroup><col style="width: 21px" /><col style="width: 95px" /><col style="width: 64px" /><col style="width: 64px" /><col style="width: 159px" /><col style="width: 71px" /><col /></colgroup>
              <thead><tr><th></th><th>构件名称</th><th>数量</th><th>长度</th><th>规格</th><th>材质</th><th class="own">归属</th></tr></thead>
              <tbody><tr v-for="(r, k) in parts" :key="k"><td class="num">{{ k + 1 }}</td><td>{{ r[0] }}</td><td>2</td><td>{{ r[1] }}</td><td></td><td>Q235B</td><td>无</td></tr></tbody>
            </table>
            <div class="hthumb"></div>
          </div>
          <div class="refresh"><button class="blue"><svg width="14" height="14"><path d="M9 1.500A6 6 0 1 1 5 1.500" fill="none" stroke="#4c6a98" stroke-width="1.300" /><path d="M9 0L12 3L12 6" fill="none" stroke="#1762c8" /></svg>刷新</button><span>修改参数后，记得刷新哦！！！</span></div>
        </div>
      </div>
      <div class="dactions"><button class="blue">确定</button><button class="white">取消</button></div>
      <svg class="grip" width="9" height="9"><path d="M6 0H8V2H6ZM3 3H5V5H3ZM6 3H8V5H6ZM0 6H2V8H0ZM3 6H5V8H3ZM6 6H8V8H6Z" fill="#808080" /></svg>
    </div>
  </div>
</template>

<style>
html, body { margin: 0; overflow: hidden; }
</style>

<style scoped>
.app { position: relative; height: 100vh; display: flex; flex-direction: column; background: #fff; color: #333; font: 12px/18px "Noto Sans", "Noto Sans CJK SC", sans-serif; white-space: nowrap; overflow: hidden; }
.app *, .app *::after { box-sizing: border-box; }
button { border: 0; padding: 0; margin: 0; background: none; font: inherit; color: inherit; white-space: nowrap; }
input, select { font: inherit; color: inherit; margin: 0; }
svg { flex: none; display: block; }
.ar { display: block; flex: none; width: 0; height: 0; border: 3px solid transparent; border-top: 4px solid #888; border-bottom: 0; }
.ar.w { border-width: 4px 4px 0; }
.ar.dk { border-top-color: #444; }
.ar.lt { border-top-color: #bbb; }

.top { position: relative; display: flex; height: 42px; flex: none; border-bottom: 1px solid #eee; }
.logo { width: 50px; flex: none; display: flex; padding: 2px 0 0 11px; }
.corner { width: 0; height: 0; border-left: 5px solid transparent; border-bottom: 5px solid #666; margin: 28px 0 0 3px; }
.topmain { flex: 1; min-width: 0; display: flex; flex-direction: column; }
.quick { height: 22px; flex: none; display: flex; align-items: center; padding: 0 0 2px 5px; }
.qb { width: 26px; display: flex; align-items: center; gap: 4px; }
.qb.r, .qb.v { width: 36px; }
.qb.r { margin-left: 9px; }
.qb.v { width: 27px; margin-left: -2px; }
.title { flex: 1; padding-left: 404px; }
.winbtns { display: flex; gap: 26px; padding-right: 14px; }
.menurow { display: flex; justify-content: space-between; height: 19px; flex: none; }
.menus { display: flex; align-items: center; }
.menus button { padding: 0 13px; height: 19px; }
.menus button.on { background: #1890ff; color: #fff; border-radius: 10px; }
.user { display: flex; align-items: center; }
.fsearch { width: 320px; height: 17px; border: 1px solid #ddd; border-radius: 2px; display: flex; align-items: center; justify-content: space-between; padding: 0 6px 0 3px; margin-right: 6px; }
.fsearch input { flex: 1; border: 0; outline: 0; padding: 0; background: none; height: 15px; }
input::placeholder { color: #999; opacity: 1; }
.help { display: flex; align-items: center; gap: 2px; margin-left: 18px; font-size: 14px; width: 23px; }
.help b { font-weight: 400; }
.shirt { width: 23px; }
.fold { width: 20px; }
.tip { position: absolute; left: 1197px; top: 13px; width: 263px; height: 34px; background: #0090ff; color: #fff; border-radius: 2px; line-height: 34px; padding-left: 7px; z-index: 3; }
.tip::after { content: ""; position: absolute; left: 263px; top: 12px; border: 5px solid transparent; border-left-color: #0090ff; border-right: 0; }

.ribbon { height: 97px; flex: none; display: flex; }
.group { flex: none; border-right: 1px solid #ddd; margin: 1px 0 4px; }
.gbody { height: 72px; display: flex; padding-top: 1px; }
.gcol { flex: none; display: flex; flex-direction: column; align-items: flex-start; gap: 4px; padding-top: 2px; }
.item { display: flex; align-items: center; height: 19px; padding: 0 3px; gap: 3px; }
.item .ar { margin-left: 2px; }
.item:not(:has(span)) .ar { margin-left: 0; }
.item.off { color: #bbb; }
.item.off .ar { border-top-color: #bbb; }
.item.on { background: #c2daf3; border-radius: 3px; width: 121px; }
.bigbtn { flex: none; display: flex; flex-direction: column; align-items: center; justify-content: flex-start; padding-top: 4px; }
.bigbtn span { margin-top: 4px; }
.glabel { display: flex; justify-content: center; align-items: center; gap: 6px; height: 20px; padding-right: 6px; }
.glabel.plain { padding: 4px 0 0; }

.combos { height: 27px; flex: none; background: #f0f0f0; border-top: 1px solid #d8d8d8; display: flex; gap: 3px; padding: 1px 2px 0; }
.combo { position: relative; width: 99px; height: 22px; }
select { appearance: none; width: 100%; height: 100%; background: #fff; border: 1px solid #ddd; border-radius: 3px; padding: 0 0 0 4px; outline: 0; }
.combo .ar, .plane .ar { position: absolute; right: 5px; top: 9px; }

.main { flex: 1; min-height: 0; display: flex; }
.strip { height: 12px; background: #e6e6e6; border-top: 1px solid #ddd; border-bottom: 1px solid #d8d8d8; flex: none; display: flex; justify-content: flex-end; align-items: center; }
.x { font-size: 14px; line-height: 10px; color: #888; padding-right: 3px; }
.ptitle { height: 22px; background: #f1f1f1; border-bottom: 1px solid #ddd; padding-left: 8px; line-height: 21px; color: #808080; flex: none; }
.navp { width: 139px; border: 1px solid #ddd; border-width: 0 1px 1px; display: flex; flex-direction: column; flex: none; }
.navtools { height: 28px; flex: none; display: flex; align-items: center; gap: 4px; border-bottom: 1px solid #ddd; }
.navtools button { width: 24px; height: 22px; border-radius: 3px; display: flex; align-items: center; justify-content: center; }
.navtools button.on { background: #c2daf3; }
.navtools button:first-child { padding-left: 2px; }
.navtools button:nth-child(2) { margin-right: 1px; }
.navbody { flex: 1; min-height: 0; display: flex; padding-top: 4px; }
.navlist { width: 123px; overflow: hidden; }
.navlist a { display: flex; align-items: center; height: 25px; margin-bottom: 3px; color: #333; text-decoration: none; }
.cat { background: #ececec; padding-left: 3px; }
.leaf { padding-left: 17px; gap: 14px; }
.leaf.on { background: #d4e7fe; }
.navbar { padding: 12px 0 0 3px; }
.navbar i { display: block; width: 8px; height: 697px; border-radius: 4px; background: #ccc; }

.mid { width: 316px; flex: none; padding: 0 4px; display: flex; flex-direction: column; gap: 4px; background: #fff; }
.box { border: 1px solid #ddd; border-top: 0; display: flex; flex-direction: column; min-height: 0; }
.list { height: 426px; flex: none; }
.prop { flex: 1; }
.tabs { height: 23px; background: #f1f1f1; border-bottom: 1px solid #ddd; display: flex; flex: none; }
.tabs button { padding: 0 8px; background: #e0e0e0; color: #808080; }
.tabs button.on { background: #f1f1f1; color: #222; font-weight: 700; }
.prop .tabs { height: 24px; }
.ltools { height: 28px; flex: none; border-bottom: 1px solid #ddd; display: flex; align-items: center; padding-left: 3px; gap: 9px; }
.ltools button { display: flex; align-items: center; gap: 4px; }
.ltools button:first-child { margin-right: -3px; }
.ltools .ar { margin-left: 3px; }
.lsearch { height: 19px; flex: none; border-bottom: 1px solid #ddd; display: flex; align-items: center; padding: 0 5px 0 2px; }
.lsearch input { flex: 1; border: 0; outline: 0; padding: 0; background: none; }
.tree { list-style: none; margin: 0; padding: 3px 0 0; }
.tree li { display: flex; align-items: center; height: 24px; }
.tree li.l0 { padding-left: 12px; }
.tree li.l1 { padding-left: 32px; }
.tree li.l2 { padding-left: 60px; }
.tree button { text-align: left; padding: 0 3px; height: 21px; white-space: pre; }
.tree button.on { background: #c2daf3; border-radius: 3px; width: 154px; }

table { border-collapse: separate; border-spacing: 0; table-layout: fixed; }
th { font-weight: 400; }
td, th { height: 21px; padding: 0 3px; border-right: 1px solid #ddd; border-bottom: 1px solid #ddd; line-height: 18px; overflow: hidden; }
.ptable { width: 100%; }
.ptable td:last-child, .ptable th:last-child { border-right: 0; }
.ptable th:last-child, .ptable td:last-child { text-align: left; padding-left: 8px; }
.ptable td.c:last-child { padding-left: 13px; }
.num { text-align: center; padding: 0; }
td.blue { color: #1454f0; }
td.gray { color: #999; }
td.c { text-align: center; }
input[type=checkbox] { appearance: none; display: block; margin: 0 auto; width: 14px; height: 14px; border: 1px solid #888; border-radius: 2px; background: #fff; position: relative; }
.ptable input[type=checkbox] { margin: 0; }
input[type=checkbox]:disabled { background: #f0f0f0; border-color: #aaa; }
input[type=checkbox]:checked { background: #2b7de0; border-color: #2b7de0; }
input[type=checkbox]:checked::after { content: ""; position: absolute; left: 4px; top: 1px; width: 4px; height: 8px; border: solid #fff; border-width: 0 2px 2px 0; transform: rotate(42deg); }

.view { flex: 1; min-width: 0; position: relative; background: #222830; overflow: hidden; }
.scene { width: 100%; height: 100%; }
.vtools { position: absolute; right: 0; top: 0; width: 33px; height: 217px; background: #fff; border: 1px solid #ddd; border-radius: 0 0 2px 2px; display: flex; flex-direction: column; align-items: center; padding-top: 11px; gap: 5px; }
.vtools button { height: 24px; }
.vtools .ar { margin-bottom: 2px; }
.vtools .fit { margin-top: -4px; }
.vtools hr { width: 24px; margin: 0; border: 0; border-top: 1px solid #555; flex: none; }
.handle { width: 4px; flex: none; display: flex; flex-direction: column; }
.handle i { margin-top: 372px; height: 100px; background: #626b76; }

.disp { width: 270px; flex: none; border: 1px solid #ddd; border-width: 0 1px 1px; display: flex; flex-direction: column; }
.disp .x { padding-right: 3px; }
.dtabs { height: 27px; flex: none; display: flex; gap: 3px; padding: 3px 3px 0; border-bottom: 1px solid #ddd; }
.dtabs button { background: #dcdcdc; height: 21px; padding: 0 6px; border-radius: 3px 3px 0 0; margin-top: 2px; color: #555; }
.dtabs button.on { background: #fff; color: #2b7de0; border: 1px solid #ddd; border-bottom: 0; height: 24px; margin-top: 0; }
.dbody { flex: 1; min-height: 0; margin: 2px 3px 0 2px; border: 1px solid #ddd; display: flex; overflow: hidden; }
.dtable { width: 248px; flex: none; align-self: flex-start; }
.dtable th.on { background: #7db5fb; color: #fff; font-weight: 700; padding: 0; }
.dtable th:first-child { border-left: 1px solid #ddd; }
td.chd { padding-left: 41px; background: linear-gradient(#ddd, #ddd) 8px 0 / 1px 100% no-repeat, linear-gradient(#ddd, #ddd) 18px 0 / 1px 100% no-repeat, linear-gradient(#ddd, #ddd) 18px 10px / 16px 1px no-repeat; }
td.chd.last { background: linear-gradient(#ddd, #ddd) 8px 0 / 1px 100% no-repeat, linear-gradient(#ddd, #ddd) 18px 0 / 1px 10px no-repeat, linear-gradient(#ddd, #ddd) 18px 10px / 16px 1px no-repeat; }
td.par { padding-left: 12px; background: linear-gradient(#ddd, #ddd) 8px 0 / 1px 100% no-repeat; }
.minus { display: inline-block; vertical-align: middle; width: 13px; height: 13px; margin: 0 6px 2px 0; border: 1px solid #888; border-radius: 2px; background: linear-gradient(#555, #555) 3px 5px / 5px 1px no-repeat #fff; }
.dscroll { flex: 1; padding: 374px 3px 0; }
.dscroll i { display: block; height: 339px; width: 8px; border-radius: 4px; background: #ccc; }
.dfoot { height: 38px; flex: none; padding: 6px 8px 0; display: flex; justify-content: flex-end; }
.dfoot button { width: 90px; height: 26px; }
button.white { background: #fff; border: 1px solid #c8c8c8; border-radius: 3px; }
button.blue { background: #2b7de1; color: #fff; border-radius: 3px; }

.status { height: 33px; flex: none; background: #fcfcfc; display: flex; align-items: center; gap: 3px; padding-left: 2px; }
.s1 { width: 87px; }
.s2 { width: 107px; }
.status > button { flex: none; height: 26px; border: 1px solid #999; border-radius: 3px; display: flex; align-items: center; justify-content: center; gap: 5px; background: #fff; }
.status > button.on { background: #d9e8fb; border-color: #2b7de0; }
.plane { position: relative; width: 100px; height: 26px; }
.plane select { border-color: #999; }
.plane .ar { top: 11px; }
.exp { margin-left: 10px; }

.taskbar { height: 40px; flex: none; display: flex; align-items: center; border-top: 1px solid #143f66; background: linear-gradient(90deg, #145893 0, #1c6ba8 70px, #3d9bcf 140px, #55b4df 320px, #57b2de 480px, #3f9dd3 640px, #3a92cf 820px, #2a7dc2 1000px, #1e67b0 1180px, #1b62a8 1420px, #164a80 1500px, #14406f 1920px); }
.start { width: 54px; padding-left: 8px; }
.dots { width: 8px; height: 30px; background: radial-gradient(circle, #0d3458 1px, transparent 1px) 0 0 / 3px 4px; margin: 0 10px 0 4px; flex: none; }
.tb { width: 58px; height: 38px; margin-right: 4px; flex: none; border: 1px solid #1e5f8e; border-radius: 3px; box-shadow: inset 0 0 0 1px #9fd0ec; background: linear-gradient(150deg, #9fcbe4, #3c89bb 55%, #4ea2d0); display: flex; align-items: center; justify-content: center; }
.tb.on { background: linear-gradient(150deg, #edf7fc, #a3d2ea 60%, #cbe8f5); }
.sweep { flex: 1; min-width: 0; height: 40px; }
.tray { display: flex; align-items: center; gap: 6px; flex: none; }
.mini { margin: 0 1px; }
.tray svg:nth-child(-n+2) { margin-bottom: 4px; }
.clock { width: 92px; flex: none; display: flex; flex-direction: column; align-items: center; color: #fff; }
.play { margin: 0 12px 0 3px; }
.desk { width: 14px; height: 39px; border: 1px solid #8fb0cc; background: linear-gradient(#5b7ea2, #1a436f); flex: none; }

.dialog { position: absolute; left: 439px; top: 151px; width: 1026px; height: 720px; background: #fff; border: 1px solid #aaa; box-shadow: 0 0 12px 3px rgba(0, 0, 0, .75); display: flex; flex-direction: column; padding: 0 10px 10px 9px; z-index: 2; }
.dhead { height: 37px; display: flex; justify-content: space-between; align-items: center; padding: 0 2px; }
.dhead h1 { margin: 0; font-size: 14px; font-weight: 400; }
.dbar { height: 26px; display: flex; align-items: center; gap: 16px; padding: 0 10px 0 1px; }
.dbar button { height: 26px; }
.back { width: 80px; }
.lib { width: 114px; margin-left: auto; }
.dmain { margin-top: 15px; height: 590px; display: flex; gap: 6px; }
.cad { width: 460px; height: 590px; }
.dright { flex: 1; min-width: 0; display: flex; flex-direction: column; padding-right: 9px; }
.etabs { height: 25px; display: flex; align-items: flex-end; gap: 3px; flex: none; }
.etabs button { height: 21px; padding: 0 6px; background: #dcdcdc; border-radius: 3px 3px 0 0; color: #555; }
.etabs button.on { height: 26px; margin-bottom: -1px; background: #fff; color: #2b7de1; border: 1px solid #c6c6ca; border-bottom: 0; position: relative; }
.ebox { flex: 1; border: 2px solid #c6c6ca; display: flex; flex-direction: column; justify-content: space-between; overflow: hidden; }
.etable { width: 100%; }
.etable td:last-child, .etable th:last-child { border-right: 0; }
.etable th { background: #f0f0f0; border-color: #c6c6ca; height: 22px; }
.etable th.own { text-align: right; padding-right: 7px; }
.hthumb { width: 373px; height: 8px; border-radius: 4px; background: #ccc; margin: 0 0 3px 14px; }
.refresh { height: 33px; padding-top: 7px; display: flex; align-items: center; gap: 6px; }
.refresh button { width: 80px; height: 26px; display: flex; align-items: center; justify-content: center; gap: 5px; }
.dactions { display: flex; justify-content: flex-end; gap: 6px; margin-top: 14px; }
.dactions button { width: 78px; height: 26px; }
.grip { position: absolute; right: 3px; bottom: 3px; }
@media (min-width: 1900px) { .tray { margin-left: 6px; } }
</style>
